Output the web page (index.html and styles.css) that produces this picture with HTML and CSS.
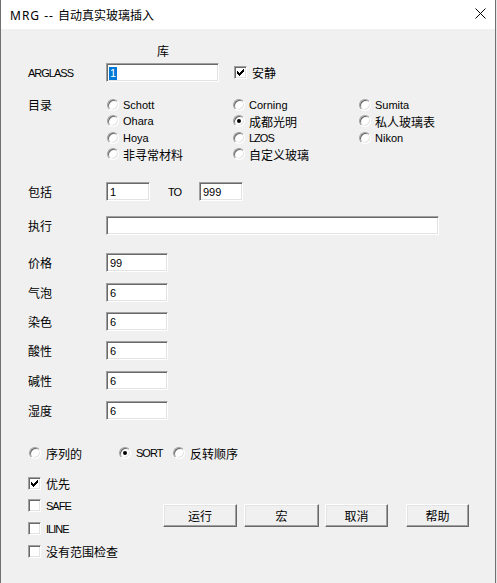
FILE: index.html
```html
<!DOCTYPE html>
<html lang="zh-CN">
<head>
<meta charset="utf-8">
<title>MRG -- 自动真实玻璃插入</title>
<link rel="stylesheet" href="styles.css">
</head>
<body>
<div class="window">
  <div class="titlebar">
    <span class="title"><span class="title-latin">MRG -- </span>自动真实玻璃插入</span>
    <svg class="close" width="11" height="11" viewBox="0 0 11 11"><path d="M0.5 0.5 L10.5 10.5 M10.5 0.5 L0.5 10.5" stroke="#000" stroke-width="1" fill="none"/></svg>
  </div>
  <div class="content">
    <div class="lib-head cn">库</div>

    <div class="row row-arglass">
      <span class="label caps">ARGLASS</span>
      <div class="field w-arglass"><span class="sel">1</span></div>
      <span class="check check-quiet checked"><svg width="7" height="7" viewBox="0 0 7 7" shape-rendering="crispEdges"><polygon points="0,2 0,5 1,5 1,6 2,6 2,7 3,7 3,6 4,6 4,5 5,5 5,4 6,4 6,3 7,3 7,0 6,0 6,1 5,1 5,2 4,2 4,3 3,3 3,4 2,4 2,3 1,3 1,2" fill="#000"/></svg></span>
      <span class="cn check-text">安静</span>
    </div>

    <div class="catalog">
      <span class="label cn cat-label">目录</span>
      <div class="radio-grid">
        <div class="opt"><span class="radio"></span><span>Schott</span></div>
        <div class="opt"><span class="radio"></span><span>Corning</span></div>
        <div class="opt"><span class="radio"></span><span>Sumita</span></div>
        <div class="opt"><span class="radio"></span><span>Ohara</span></div>
        <div class="opt"><span class="radio on"></span><span class="cn">成都光明</span></div>
        <div class="opt"><span class="radio"></span><span class="cn">私人玻璃表</span></div>
        <div class="opt"><span class="radio"></span><span>Hoya</span></div>
        <div class="opt"><span class="radio"></span><span class="caps">LZOS</span></div>
        <div class="opt"><span class="radio"></span><span>Nikon</span></div>
        <div class="opt"><span class="radio"></span><span class="cn">非寻常材料</span></div>
        <div class="opt"><span class="radio"></span><span class="cn">自定义玻璃</span></div>
      </div>
    </div>

    <div class="row row-include">
      <span class="label cn">包括</span>
      <div class="field w-small"><span>1</span></div>
      <span class="to caps">TO</span>
      <div class="field w-small"><span>999</span></div>
    </div>

    <div class="row row-exec">
      <span class="label cn">执行</span>
      <div class="field w-exec"></div>
    </div>

    <div class="props">
      <div class="row"><span class="label cn">价格</span><div class="field w-prop"><span>99</span></div></div>
      <div class="row"><span class="label cn">气泡</span><div class="field w-prop"><span>6</span></div></div>
      <div class="row"><span class="label cn">染色</span><div class="field w-prop"><span>6</span></div></div>
      <div class="row"><span class="label cn">酸性</span><div class="field w-prop"><span>6</span></div></div>
      <div class="row"><span class="label cn">碱性</span><div class="field w-prop"><span>6</span></div></div>
      <div class="row"><span class="label cn">湿度</span><div class="field w-prop"><span>6</span></div></div>
    </div>

    <div class="sort-row">
      <div class="opt sort-1"><span class="radio"></span><span class="cn">序列的</span></div>
      <div class="opt sort-2"><span class="radio on"></span><span class="caps">SORT</span></div>
      <div class="opt"><span class="radio"></span><span class="cn">反转顺序</span></div>
    </div>

    <div class="bottom">
      <div class="checks">
        <div class="check-row"><span class="check checked"><svg width="7" height="7" viewBox="0 0 7 7" shape-rendering="crispEdges"><polygon points="0,2 0,5 1,5 1,6 2,6 2,7 3,7 3,6 4,6 4,5 5,5 5,4 6,4 6,3 7,3 7,0 6,0 6,1 5,1 5,2 4,2 4,3 3,3 3,4 2,4 2,3 1,3 1,2" fill="#000"/></svg></span><span class="cn">优先</span></div>
        <div class="check-row"><span class="check"></span><span class="caps">SAFE</span></div>
        <div class="check-row"><span class="check"></span><span class="caps">ILINE</span></div>
        <div class="check-row"><span class="check"></span><span class="cn">没有范围检查</span></div>
      </div>
      <div class="buttons">
        <div class="btn b-run cn">运行</div>
        <div class="btn b-macro cn">宏</div>
        <div class="btn b-cancel cn">取消</div>
        <div class="btn b-help cn">帮助</div>
      </div>
    </div>
  </div>
</div>
</body>
</html>
```
FILE: styles.css
```css
* { box-sizing: border-box; }
html, body { margin: 0; padding: 0; }
body {
  width: 497px;
  height: 583px;
  overflow: hidden;
  background: #e6e6e6;
  font-family: "Liberation Sans", "Noto Sans CJK SC", sans-serif;
  font-size: 11px;
  color: #000;
}
.cn {
  font-family: "Noto Sans CJK SC", "Liberation Sans", sans-serif;
  font-size: 12px;
}
.caps { letter-spacing: -1px; }

.window {
  width: 496px;
  height: 583px;
  background: #f0f0f0;
  border-left: 1px solid #707070;
  border-right: 1px solid #707070;
  display: flex;
  flex-direction: column;
}
.titlebar {
  height: 29px;
  flex: none;
  background: #fff;
  display: flex;
  align-items: center;
  padding: 0 9px 0 9px;
  font-family: "Noto Sans", "Noto Sans CJK SC", sans-serif;
  font-size: 12px;
}
.title { flex: 1; white-space: pre; }
.title-latin { letter-spacing: 1px; }
.close { display: block; margin-top: -2px; }

.content {
  padding-left: 27px;
  display: flex;
  flex-direction: column;
}
.lib-head {
  margin-top: 14px;
  height: 16px;
  line-height: 16px;
  padding-left: 129px;
}

.row {
  display: flex;
  align-items: center;
  height: 19px;
}
.label {
  width: 78px;
  flex: none;
}
.field {
  height: 19px;
  background: #fff;
  border: 1px solid;
  border-color: #a0a0a0 #ffffff #ffffff #a0a0a0;
  box-shadow: inset 1px 1px 0 #696969, inset -1px -1px 0 #e3e3e3;
  display: flex;
  align-items: center;
  padding: 1px 0 0 3px;
  font-size: 11px;
  flex: none;
}
.sel {
  display: inline-block;
  background: #0078d7;
  color: #fff;
  height: 13px;
  line-height: 13px;
  padding: 0 1px;
  margin-left: -1px;
}
.w-arglass { width: 113px; }
.w-small { width: 44px; }
.w-exec { width: 333px; }
.w-prop { width: 62px; }

.row-arglass { margin-top: 4px; }
.check-quiet { margin-left: 15px; }
.check-text { margin-left: 5px; }

.check {
  width: 13px;
  height: 13px;
  flex: none;
  background: #fff;
  border: 1px solid;
  border-color: #a0a0a0 #ffffff #ffffff #a0a0a0;
  box-shadow: inset 1px 1px 0 #696969, inset -1px -1px 0 #e3e3e3;
  display: flex;
  align-items: center;
  justify-content: center;
}
.check svg { display: block; }

.radio {
  width: 12px;
  height: 12px;
  flex: none;
  border-radius: 50%;
  background: #fff;
  border: 1px solid;
  border-color: #a0a0a0 #ffffff #ffffff #a0a0a0;
  box-shadow: inset 1px 1px 0 #696969, inset -1px -1px 0 #e3e3e3;
  display: flex;
  align-items: center;
  justify-content: center;
}
.radio.on::after {
  content: "";
  width: 4px;
  height: 4px;
  border-radius: 50%;
  background: #000;
}
.opt {
  display: flex;
  align-items: center;
  gap: 4px;
  white-space: nowrap;
}

.catalog {
  margin-top: 14px;
  display: flex;
  align-items: flex-start;
}
.cat-label {
  height: 17px;
  display: flex;
  align-items: center;
}
.radio-grid {
  margin-left: 1px;
  display: grid;
  grid-template-columns: 126px 126px auto;
  grid-template-rows: 17px 16px 17px 16px;
}

.row-include { margin-top: 20px; }
.to { width: 31px; margin-left: 18px; flex: none; }
.row-exec { margin-top: 15px; }

.props {
  margin-top: 18px;
  display: grid;
  grid-template-rows: 30px 29px 29px 30px 30px 19px;
  align-items: start;
}

.sort-row {
  margin-top: 25px;
  height: 16px;
  display: flex;
  align-items: center;
  padding-left: 1px;
}
.sort-row .opt { gap: 5px; }
.sort-1 { width: 90px; flex: none; }
.sort-2 { width: 54px; flex: none; gap: 4px; }

.bottom {
  margin-top: 11px;
  display: flex;
  align-items: flex-start;
}
.checks {
  width: 135px;
  flex: none;
  display: grid;
  grid-template-rows: 22px 23px 23px 23px;
}
.check-row {
  display: flex;
  align-items: center;
  gap: 5px;
}
.buttons {
  margin-top: 32px;
  display: flex;
}
.btn {
  height: 23px;
  background: #f0f0f0;
  border: 1px solid;
  border-color: #ffffff #696969 #696969 #ffffff;
  box-shadow: inset -1px -1px 0 #a0a0a0, inset 1px 1px 0 #e3e3e3;
  display: flex;
  align-items: center;
  justify-content: center;
  flex: none;
}
.b-run { width: 74px; }
.b-macro { width: 75px; margin-left: 7px; }
.b-cancel { width: 63px; margin-left: 6px; }
.b-help { width: 63px; margin-left: 18px; }
```
